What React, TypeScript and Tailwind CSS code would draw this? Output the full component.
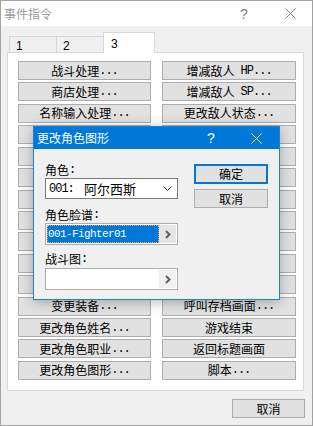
const leftCmds = [
  '战斗处理...', '商店处理...', '名称输入处理...', '增减 HP...', '增减 SP...',
  '更改状态...', '全回复', '增减 EXP...', '增减等级...', '增减能力值...',
  '增减特技...', '变更装备...', '更改角色姓名...', '更改角色职业...', '更改角色图形...',
];

const rightCmds = [
  '增减敌人 HP...', '增减敌人 SP...', '更改敌人状态...', '敌人全回复', '敌人出现...',
  '敌人变身...', '显示动画...', '伤害处理...', '强制行动...', '中断战斗',
  '呼叫菜单画面', '呼叫存档画面...', '游戏结束', '返回标题画面', '脚本...',
];

// latin runs get the narrow monospace look of the old dialog font
const Txt = ({ s }: { s: string }) => (
  <>
    {s.split(/([\x20-\x7e]+)/).filter(Boolean).map((p, i) =>
      /^[\x20-\x7e]+$/.test(p) ? (
        <span key={i} className="font-['Liberation_Mono',monospace] text-[12px] tracking-[-1px] whitespace-pre">
          {p}
        </span>
      ) : (
        <span key={i}>{p}</span>
      )
    )}
  </>
);

const XIcon = ({ color, className }: { color: string; className?: string }) => (
  <svg width="11" height="11" viewBox="0 0 11 11" className={className}>
    <path d="M0.5 0.5 L10.5 10.5 M10.5 0.5 L0.5 10.5" stroke={color} strokeWidth="1" />
  </svg>
);

const Arrow = ({ bg }: { bg: string }) => (
  <div className={`w-[17px] h-full flex items-center justify-center ${bg}`}>
    <svg width="6" height="9" viewBox="0 0 6 9">
      <polyline points="1,1 4.5,4.5 1,8" fill="none" stroke="#5f5f5f" strokeWidth="2" />
    </svg>
  </div>
);

const CmdButton = ({ label, w }: { label: string; w: string }) => (
  <div className={`${w} h-[19px] flex items-center justify-center bg-[#e1e1e1] border border-[#adadad]`}>
    <Txt s={label} />
  </div>
);

export default function App() {
  return (
    <div className="relative w-[313px] h-[426px] flex flex-col border border-[#a3a3a3] bg-[#f0f0f0] font-['Noto_Sans_CJK_SC',sans-serif] text-[12px] text-black leading-none overflow-hidden">
      {/* title bar (inactive) */}
      <div className="h-[25px] shrink-0 bg-white flex items-center pl-[3px]">
        <span className="text-[#9a9a9a]">事件指令</span>
        <span className="ml-auto w-[12px] text-center text-[#808080] font-['Liberation_Sans',sans-serif] text-[14px]">?</span>
        <XIcon color="#808080" className="ml-[35px] mr-[16px]" />
      </div>

      {/* tabs */}
      <div className="h-[20px] mt-[6px] flex items-end pl-[8px] relative z-10">
        <div className="w-[47px] h-[16px] border-l border-t border-[#d9d9d9] pl-[6px] pt-[3px] font-['Liberation_Sans',sans-serif]">1</div>
        <div className="w-[47px] h-[16px] border-l border-t border-[#d9d9d9] pl-[6px] pt-[3px] font-['Liberation_Sans',sans-serif]">2</div>
        <div className="w-[52px] h-[21px] -mb-[1px] bg-white border-l border-t border-r border-[#d9d9d9] pl-[7px] pt-[5px] font-['Liberation_Sans',sans-serif]">3</div>
      </div>

      {/* tab page */}
      <div className="ml-[6px] w-[297px] h-[339px] bg-white border border-[#d9d9d9] pt-[8px] pl-[10px] flex gap-[11px]">
        <div className="flex flex-col gap-[2.43px]">
          {leftCmds.map((c) => (
            <CmdButton key={c} label={c} w="w-[133px]" />
          ))}
        </div>
        <div className="flex flex-col gap-[2.43px]">
          {rightCmds.map((c) => (
            <CmdButton key={c} label={c} w="w-[134px]" />
          ))}
        </div>
      </div>

      <div className="flex justify-end mt-[8px] mr-[7px]">
        <div className="w-[73px] h-[19px] flex items-center justify-center bg-[#e1e1e1] border border-[#adadad]">取消</div>
      </div>

      {/* modal dialog on top */}
      <div className="absolute left-[32px] top-[125px] w-[247px] h-[174px] flex flex-col bg-[#f0f0f0] border border-[#1883d7] shadow-[0_2px_12px_rgba(0,0,0,0.28)]">
        <div className="h-[22px] shrink-0 bg-[#0078d7] flex items-center pl-[3px] text-white">
          <span>更改角色图形</span>
          <span className="ml-auto w-[12px] text-center font-['Liberation_Sans',sans-serif] text-[14px]">?</span>
          <XIcon color="#ffffff" className="ml-[34px] mr-[17px]" />
        </div>
        <div className="flex">
          <div className="ml-[11px] w-[133px] pt-[13px] flex flex-col">
            <div className="h-[16px] flex items-center"><Txt s="角色:" /></div>
            <div className="h-[21px] bg-white border border-[#7a7a7a] flex items-center pl-[3px] pr-[5px]">
              <Txt s="001: " />
              <span className="ml-[4px] text-[13px]">阿尔西斯</span>
              <svg width="9" height="5" viewBox="0 0 9 5" className="ml-auto">
                <polyline points="0.5,0.5 4.5,4.5 8.5,0.5" fill="none" stroke="#333" strokeWidth="1" />
              </svg>
            </div>
            <div className="h-[16px] mt-[8px] flex items-center"><Txt s="角色脸谱:" /></div>
            <div className="h-[22px] bg-white border border-[#adadad] flex p-[1px]">
              <div className="flex-1 bg-[#0078d7] border border-dotted border-[#f2a23c] flex items-center text-white font-['Liberation_Mono',monospace] text-[11px] tracking-[-0.6px]">
                001-Fighter01
              </div>
              <Arrow bg="bg-[#e5e5e5]" />
            </div>
            <div className="h-[16px] mt-[6px] flex items-center"><Txt s="战斗图:" /></div>
            <div className="h-[22px] mt-[1px] bg-white border border-[#adadad] flex p-[1px]">
              <div className="flex-1" />
              <Arrow bg="bg-[#f0f0f0]" />
            </div>
          </div>
          <div className="ml-[16px] w-[74px] pt-[15px] flex flex-col">
            <div className="h-[20px] flex items-center justify-center bg-[#e1e1e1] border-2 border-[#0078d7]">确定</div>
            <div className="h-[19px] mt-[5px] flex items-center justify-center bg-[#e1e1e1] border border-[#adadad]">取消</div>
          </div>
        </div>
      </div>
    </div>
  );
}
